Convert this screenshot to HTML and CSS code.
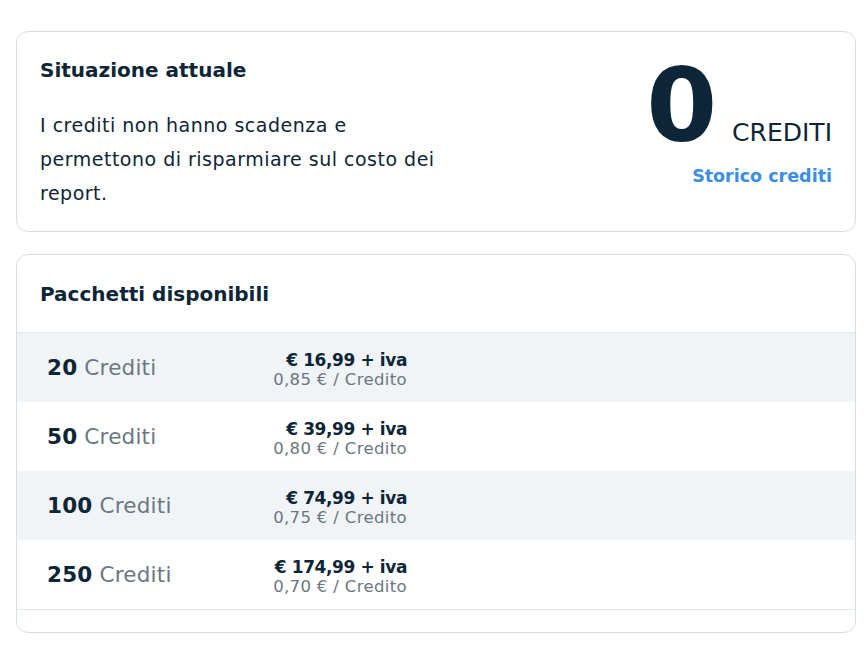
FILE: index.html
```html
<!DOCTYPE html>
<html lang="it">
<head>
<meta charset="utf-8">
<link rel="stylesheet" href="styles.css">
</head>
<body>
<div class="page">
  <section class="card status">
    <div class="status-text">
      <h2 class="title">Situazione attuale</h2>
      <p class="desc">I crediti non hanno scadenza e permettono di risparmiare sul costo dei report.</p>
    </div>
    <div class="balance">
      <div class="balance-row"><span class="amount">0</span><span class="unit">CREDITI</span></div>
      <a class="history" href="#">Storico crediti</a>
    </div>
  </section>

  <section class="card packs">
    <h2 class="title packs-title">Pacchetti disponibili</h2>
    <div class="list">
      <div class="row alt">
        <div class="qty"><b>20</b> Crediti</div>
        <div class="price"><div class="main">€ 16,99 + iva</div><div class="unitprice">0,85 € / Credito</div></div>
      </div>
      <div class="row">
        <div class="qty"><b>50</b> Crediti</div>
        <div class="price"><div class="main">€ 39,99 + iva</div><div class="unitprice">0,80 € / Credito</div></div>
      </div>
      <div class="row alt">
        <div class="qty"><b>100</b> Crediti</div>
        <div class="price"><div class="main">€ 74,99 + iva</div><div class="unitprice">0,75 € / Credito</div></div>
      </div>
      <div class="row">
        <div class="qty"><b>250</b> Crediti</div>
        <div class="price"><div class="main">€ 174,99 + iva</div><div class="unitprice">0,70 € / Credito</div></div>
      </div>
    </div>
  </section>
</div>
</body>
</html>
```

FILE: styles.css
```css
* { box-sizing: border-box; }
html, body { margin: 0; padding: 0; background: #ffffff; }
body {
  font-family: "DejaVu Sans", "Noto Sans", sans-serif;
  color: #0d2538;
}
.page {
  width: 840px;
  margin-left: 16px;
  padding-top: 31px;
  display: flex;
  flex-direction: column;
  gap: 22px;
}
.card {
  border: 1px solid #d5dee5;
  border-radius: 12px;
  background: #fff;
}
.status {
  height: 201px;
  display: flex;
  justify-content: space-between;
  padding: 24px 23px 0 23px;
}
.title {
  margin: 0;
  font-size: 20px;
  font-weight: 700;
  line-height: 28px;
  color: #0d2538;
}
.desc {
  margin: 24px 0 0 0;
  width: 408px;
  font-size: 19px;
  line-height: 34px;
  letter-spacing: 0.5px;
  color: #0d2538;
}
.balance {
  display: flex;
  flex-direction: column;
  align-items: flex-end;
}
.balance-row {
  display: flex;
  align-items: baseline;
  gap: 15px;
  height: 100px;
}
.amount {
  font-size: 102px;
  font-weight: 700;
  line-height: 100px;
  color: #0d2538;
}
.unit {
  font-size: 25px;
  font-weight: 400;
  color: #0d2538;
}
.history {
  margin-top: 10px;
  font-size: 17.5px;
  font-weight: 700;
  color: #3a8ee6;
  text-decoration: none;
}
.packs {
  height: 379px;
  overflow: hidden;
}
.packs-title {
  padding: 25px 23px 0 23px;
  height: 77px;
}
.list {
  border-top: 1px solid #e3e8ec;
  border-bottom: 1px solid #e3e8ec;
}
.row {
  display: grid;
  grid-template-columns: 200px 160px;
  align-items: center;
  height: 69px;
  padding-left: 30px;
}
.row.alt { background: #f0f4f7; }
.qty {
  font-size: 21.5px;
  letter-spacing: 0.2px;
  color: #6b7783;
}
.qty b { color: #0d2538; font-weight: 700; }
.price {
  text-align: right;
  padding-top: 3px;
  display: flex;
  flex-direction: column;
  gap: 1px;
}
.price .main {
  font-size: 17px;
  font-weight: 700;
  line-height: 19px;
  letter-spacing: -0.4px;
  color: #0d2538;
}
.price .unitprice {
  font-size: 16.5px;
  line-height: 17px;
  letter-spacing: 0.35px;
  color: #6b7783;
}
```
